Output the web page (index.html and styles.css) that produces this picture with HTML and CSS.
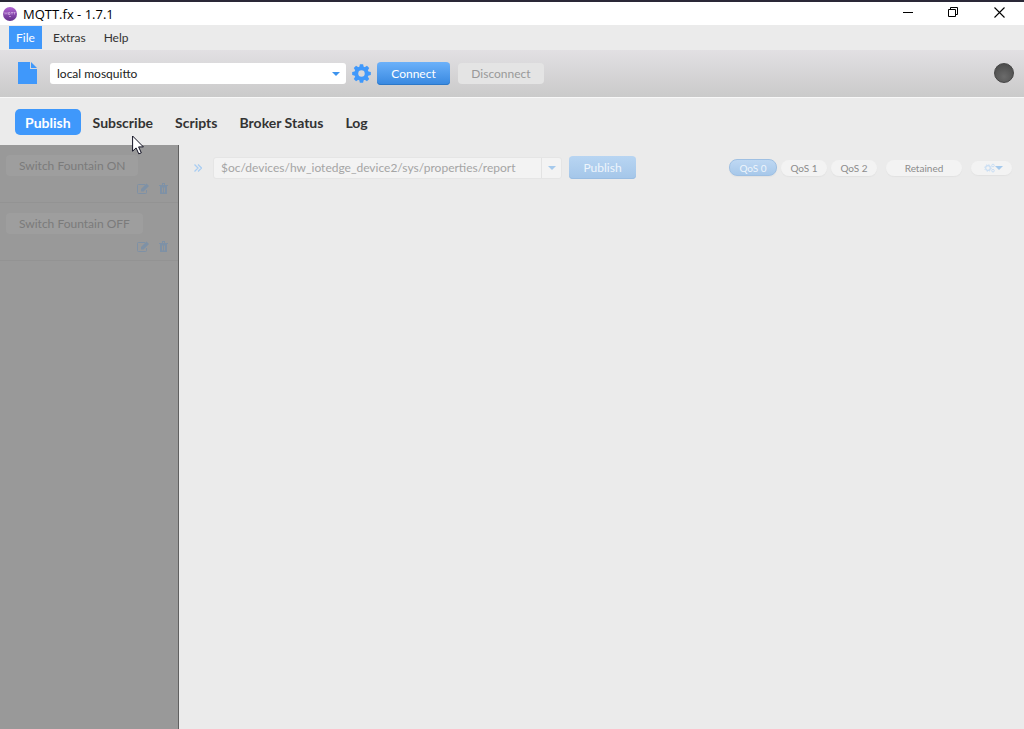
FILE: index.html
```html
<!DOCTYPE html>
<html lang="en">
<head>
    <meta charset="UTF-8">
    <meta name="viewport" content="width=device-width, initial-scale=1.0">
    <title>MQTT.fx - 1.7.1</title>
    <link rel="stylesheet" href="styles.css">
</head>
<body>
    <header class="titlebar">
        <svg class="logo" width="14" height="14" viewBox="0 0 14 14">
            <defs>
                <linearGradient id="logoFill" x1="0" y1="0" x2="0" y2="1">
                    <stop offset="0" stop-color="#b265d4"/>
                    <stop offset="1" stop-color="#63308a"/>
                </linearGradient>
            </defs>
            <circle cx="7" cy="7" r="7" fill="url(#logoFill)"/>
            <path d="M2 7.500V5.500l1 1 1-1v2M5.500 5.500h1.500v2H5.500zM8 5.500h2M9 5.500v2M10.500 5.500h2M11.500 5.500v2M6 9.500h2" fill="none" stroke="#e3c2ef" stroke-width=".6"/>
        </svg>
        <h1>MQTT.fx - 1.7.1</h1>
        <div class="window-buttons">
            <button type="button" aria-label="Minimize">
                <svg width="11" height="11"><path d="M1 5.500h10" stroke="#000"/></svg>
            </button>
            <button type="button" aria-label="Restore">
                <svg width="11" height="11"><path d="M.5 2.500h7v7h-7zM2.500 2.500v-2h7v7h-2" fill="none" stroke="#000"/></svg>
            </button>
            <button type="button" aria-label="Close">
                <svg width="11" height="11"><path d="M.5.5l10 10M10.500.5l-10 10" stroke="#000" stroke-width="1.100"/></svg>
            </button>
        </div>
    </header>

    <nav class="menubar">
        <button type="button" class="active">File</button>
        <button type="button">Extras</button>
        <button type="button">Help</button>
    </nav>

    <div class="toolbar">
        <button type="button" class="file-button" aria-label="New profile">
            <svg width="19" height="22" viewBox="0 0 19 22" fill="#3f98fb"><path d="M0 0h12v7h7v15H0z"/><path d="M13 0l6 6h-6z"/></svg>
        </button>
        <div class="select-wrap">
            <select class="profile" aria-label="Connection profile">
                <option>local mosquitto</option>
            </select>
            <svg class="arrow" width="8" height="4" viewBox="0 0 8 4"><path d="M0 0h8L4 4z" fill="#3d93ee"/></svg>
        </div>
        <button type="button" class="gear-button" aria-label="Settings">
            <svg width="19" height="19" viewBox="-10 -10 20 20">
                <g fill="#3f98fb">
                    <path id="teeth" d="M-2.500-6L-1.700-9.800h3.400L2.500-6V6L1.700 9.800h-3.400L-2.500 6z"/>
                    <use href="#teeth" transform="rotate(45)"/>
                    <use href="#teeth" transform="rotate(90)"/>
                    <use href="#teeth" transform="rotate(135)"/>
                    <circle r="7.500"/>
                </g>
                <circle r="3.400" fill="#d8d7d8"/>
            </svg>
        </button>
        <button type="button" class="btn connect">Connect</button>
        <button type="button" class="btn disconnect" disabled>Disconnect</button>
        <span class="status-light"></span>
    </div>

    <nav class="tabs">
        <button type="button" class="active">Publish</button>
        <button type="button">Subscribe</button>
        <button type="button">Scripts</button>
        <button type="button">Broker Status</button>
        <button type="button">Log</button>
        <svg class="pointer" width="13" height="20" viewBox="0 0 13 20"><path d="M.6 1v15.200l3.500-3.300 2.700 6 2.500-1.100-2.700-5.900h4.800z" fill="#fff" stroke="#111122"/></svg>
    </nav>

    <svg class="symbols" width="0" height="0">
        <symbol id="edit" viewBox="0 0 12 11">
            <path d="M8 1.500H1.500A1 1 0 0 0 .5 2.500v7a1 1 0 0 0 1 1h7a1 1 0 0 0 1-1V7" fill="none" stroke="currentColor"/>
            <path d="M4 8.500V6l5.500-5.500L12 3 6.500 8.500z" fill="currentColor"/>
        </symbol>
        <symbol id="trash" viewBox="0 0 9 11">
            <path d="M0 2h9v1H0zM3 0h3v2H5V1H4v1H3zM1 3h7v8H1z" fill="currentColor"/>
            <path d="M3.500 4.500v5M5.500 4.500v5" stroke="#979797"/>
        </symbol>
    </svg>

    <main>
        <aside class="scripts">
            <div class="script">
                <button type="button" class="btn" disabled>Switch Fountain ON</button>
                <div class="actions">
                    <button type="button" aria-label="Edit" disabled><svg width="12" height="11"><use href="#edit"/></svg></button>
                    <button type="button" aria-label="Delete" disabled><svg width="9" height="11"><use href="#trash"/></svg></button>
                </div>
            </div>
            <div class="script">
                <button type="button" class="btn" disabled>Switch Fountain OFF</button>
                <div class="actions">
                    <button type="button" aria-label="Edit" disabled><svg width="12" height="11"><use href="#edit"/></svg></button>
                    <button type="button" aria-label="Delete" disabled><svg width="9" height="11"><use href="#trash"/></svg></button>
                </div>
            </div>
        </aside>

        <section class="publish">
            <button type="button" class="expand" aria-label="Hide scripts" disabled>
                <svg width="8" height="8"><path d="M.5 .5L4 4 .5 7.500M4 .5L7.500 4 4 7.500" fill="none" stroke="#a9cdf2" stroke-width="1.300"/></svg>
            </button>
            <div class="topic">
                <input type="text" aria-label="Topic" value="$oc/devices/hw_iotedge_device2/sys/properties/report" disabled>
                <button type="button" aria-label="Show topics" disabled>
                    <svg width="8" height="4"><path d="M0 0h8L4 4z" fill="#a5c9ec"/></svg>
                </button>
            </div>
            <button type="button" class="btn publish-button" disabled>Publish</button>
            <div class="pills">
                <button type="button" class="pill selected" disabled>QoS 0</button>
                <button type="button" class="pill" disabled>QoS 1</button>
                <button type="button" class="pill" disabled>QoS 2</button>
                <button type="button" class="pill retained" disabled>Retained</button>
                <button type="button" class="pill options" aria-label="Options" disabled>
                    <svg width="19" height="10" viewBox="0 0 19 10">
                        <g fill="none" stroke="#c9def3">
                            <circle cx="4" cy="5" r="2.300" stroke-width="1.200"/>
                            <circle cx="4" cy="5" r="3.300" stroke-dasharray="1.300"/>
                            <circle cx="9" cy="2.500" r="1.300"/>
                            <circle cx="9" cy="7.700" r="1.300"/>
                        </g>
                        <path d="M11 3h8l-4 4z" fill="#a5c9ec"/>
                    </svg>
                </button>
            </div>
        </section>
    </main>
</body>
</html>
```
FILE: styles.css
```css
* {
    margin: 0;
    padding: 0;
    box-sizing: border-box;
}

body {
    display: flex;
    flex-direction: column;
    min-height: 100vh;
    background-color: #ebebeb;
    color: #333;
    font-family: Lato, "Liberation Sans", sans-serif;
    font-size: 12px;
}

button, input, select {
    border: none;
    background: none;
    color: inherit;
    font: inherit;
}

svg {
    display: block;
}

.symbols {
    position: absolute;
}

.titlebar {
    display: flex;
    align-items: center;
    height: 25px;
    padding-left: 3px;
    border-top: 2px solid #2a2837;
    background-color: #fff;
}

.titlebar h1 {
    margin-left: 6px;
    color: #000;
    font-family: "Open Sans", "Noto Sans", sans-serif;
    font-size: 13px;
    font-weight: normal;
    line-height: 16px;
}

.window-buttons {
    display: flex;
    height: 100%;
    margin-left: auto;
    padding-right: 2px;
}

.window-buttons button {
    display: flex;
    justify-content: center;
    align-items: center;
    width: 46px;
    padding-bottom: 2px;
}

.menubar {
    display: flex;
    height: 25px;
    padding: 1px 9px;
}

.menubar button {
    padding: 0 7px;
    margin-right: 4px;
}

.menubar .active {
    width: 33px;
    background-color: #3f98fb;
    color: #fff;
}

.toolbar {
    display: flex;
    align-items: center;
    height: 48px;
    padding: 0 10px 1px 18px;
    border-bottom: 1px solid #f8f8f8;
    background: linear-gradient(#e2e0e3, #cacaca);
}

.file-button {
    margin-right: 13px;
}

.select-wrap {
    position: relative;
    width: 296px;
}

.profile {
    display: block;
    width: 100%;
    height: 21px;
    padding-left: 7px;
    border-radius: 3px;
    background-color: #fff;
    color: #222;
    appearance: none;
}

.arrow {
    position: absolute;
    top: 9px;
    right: 6px;
    pointer-events: none;
}

.gear-button {
    margin: 0 6px;
}

.btn {
    height: 21px;
    padding: 0 13px;
    border-radius: 4px;
    background-color: #e4e4e4;
    color: #999;
}

.connect {
    width: 73px;
    height: 23px;
    margin-right: 8px;
    background: linear-gradient(#6bb1fa, #3888e0);
    box-shadow: inset 0 -1px #2d78c8;
    color: #fff;
}

.disconnect {
    width: 86px;
}

.status-light {
    width: 20px;
    height: 20px;
    margin-left: auto;
    border: 1px solid #444;
    border-radius: 50%;
    background: radial-gradient(circle at 50% 70%, #6b6b6b, #454545);
}

.tabs {
    position: relative;
    display: flex;
    align-items: flex-start;
    height: 47px;
    padding: 11px 15px;
}

.tabs button {
    height: 26px;
    margin-right: 2px;
    padding: 0 10px;
    border-radius: 5px;
    font-size: 14px;
    font-weight: bold;
}

.tabs .active {
    background-color: #3f98fb;
    color: #fff;
}

.pointer {
    position: absolute;
    top: 37px;
    left: 132px;
    z-index: 1;
}

main {
    display: flex;
    flex: 1;
}

.scripts {
    width: 179px;
    border-right: 1px solid #606060;
    background-color: #999;
}

.script {
    height: 58px;
    padding: 10px 6px;
    border-bottom: 1px solid #939393;
}

.script .btn {
    background-color: #9e9e9e;
    color: #7b7b7b;
}

.actions {
    display: flex;
    justify-content: flex-end;
    gap: 10px;
    padding: 7px 4px;
    color: #7e91a6;
}

.publish {
    display: flex;
    flex: 1;
    align-items: center;
    height: 45px;
    padding: 0 12px 0 15px;
}

.expand {
    margin-right: 11px;
}

.topic {
    display: flex;
    width: 349px;
    height: 22px;
    border: 1px solid #e5e5e5;
    border-radius: 3px;
    background-color: #f3f3f3;
}

.topic input {
    flex: 1;
    min-width: 0;
    padding: 0 7px;
    color: #a5a5a5;
}

.topic button {
    display: flex;
    justify-content: center;
    align-items: center;
    width: 20px;
    border-left: 1px solid #e3e3e3;
}

.publish-button {
    width: 67px;
    height: 23px;
    margin-left: 7px;
    background: linear-gradient(#b8d5f2, #a4c6e9);
    box-shadow: inset 0 -1px #9abde2;
    color: #eef5fc;
}

.pills {
    display: flex;
    align-items: center;
    gap: 4px;
    margin-left: auto;
}

.pill {
    width: 46px;
    height: 16px;
    border-radius: 8px;
    background-color: #f3f3f3;
    box-shadow: 0 1px 1px #e2e2e2;
    color: #8c8c8c;
    font-size: 10px;
    line-height: 14px;
}

.selected {
    width: 48px;
    height: 17px;
    border: 1px solid #9fc0e3;
    background: linear-gradient(#bed8f3, #a7c8ea);
    color: #eef5fc;
}

.retained {
    width: 76px;
    margin: 0 5px;
}

.options {
    display: flex;
    justify-content: center;
    align-items: center;
    width: 41px;
    height: 14px;
    padding-left: 4px;
}
```
